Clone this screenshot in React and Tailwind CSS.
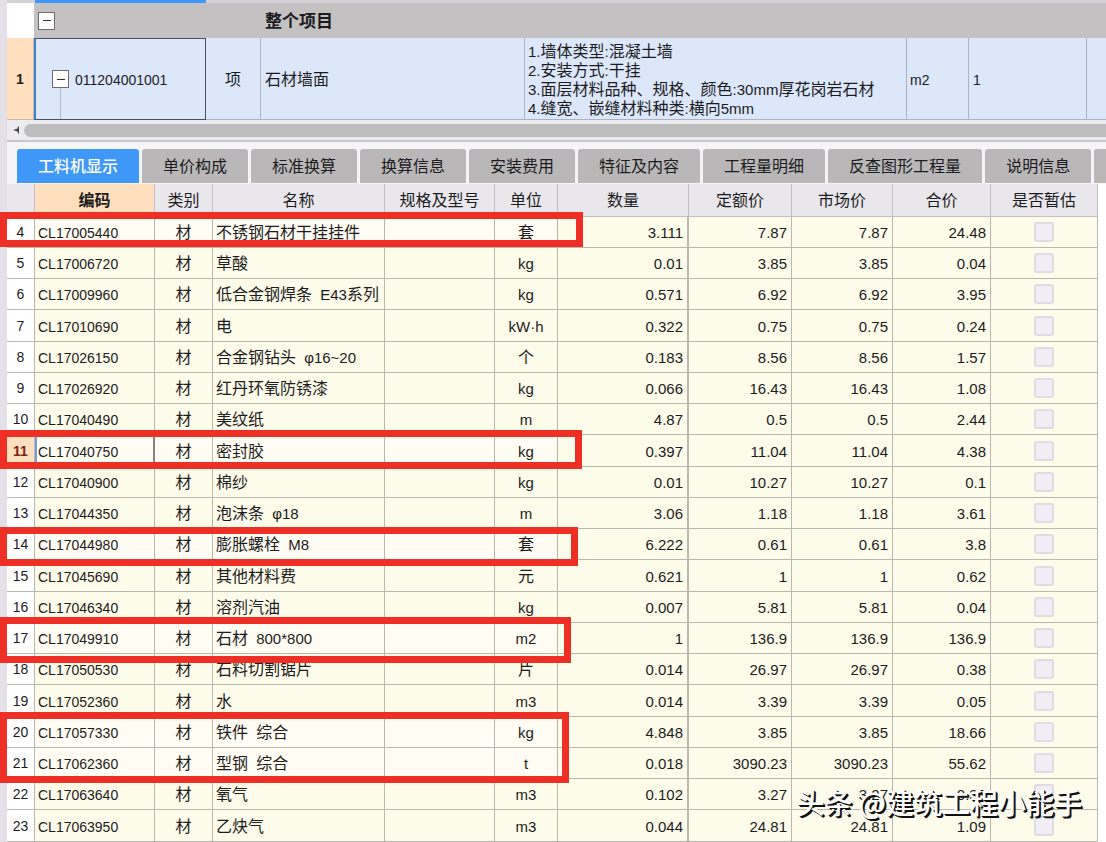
const materials = [
  [4, "CL17005440", "不锈钢石材干挂挂件", "套", "3.111", "7.87", "7.87", "24.48"],
  [5, "CL17006720", "草酸", "kg", "0.01", "3.85", "3.85", "0.04"],
  [6, "CL17009960", "低合金钢焊条 E43系列", "kg", "0.571", "6.92", "6.92", "3.95"],
  [7, "CL17010690", "电", "kW·h", "0.322", "0.75", "0.75", "0.24"],
  [8, "CL17026150", "合金钢钻头 φ16~20", "个", "0.183", "8.56", "8.56", "1.57"],
  [9, "CL17026920", "红丹环氧防锈漆", "kg", "0.066", "16.43", "16.43", "1.08"],
  [10, "CL17040490", "美纹纸", "m", "4.87", "0.5", "0.5", "2.44"],
  [11, "CL17040750", "密封胶", "kg", "0.397", "11.04", "11.04", "4.38"],
  [12, "CL17040900", "棉纱", "kg", "0.01", "10.27", "10.27", "0.1"],
  [13, "CL17044350", "泡沫条 φ18", "m", "3.06", "1.18", "1.18", "3.61"],
  [14, "CL17044980", "膨胀螺栓 M8", "套", "6.222", "0.61", "0.61", "3.8"],
  [15, "CL17045690", "其他材料费", "元", "0.621", "1", "1", "0.62"],
  [16, "CL17046340", "溶剂汽油", "kg", "0.007", "5.81", "5.81", "0.04"],
  [17, "CL17049910", "石材 800*800", "m2", "1", "136.9", "136.9", "136.9"],
  [18, "CL17050530", "石料切割锯片", "片", "0.014", "26.97", "26.97", "0.38"],
  [19, "CL17052360", "水", "m3", "0.014", "3.39", "3.39", "0.05"],
  [20, "CL17057330", "铁件 综合", "kg", "4.848", "3.85", "3.85", "18.66"],
  [21, "CL17062360", "型钢 综合", "t", "0.018", "3090.23", "3090.23", "55.62"],
  [22, "CL17063640", "氧气", "m3", "0.102", "3.27", "3.27", "0.33"],
  [23, "CL17063950", "乙炔气", "m3", "0.044", "24.81", "24.81", "1.09"],
];

const marked = [4, 11, 14, 17, 20, 21];

const tabs = [
  "工料机显示",
  "单价构成",
  "标准换算",
  "换算信息",
  "安装费用",
  "特征及内容",
  "工程量明细",
  "反查图形工程量",
  "说明信息",
];

const features = [
  "1.墙体类型:混凝土墙",
  "2.安装方式:干挂",
  "3.面层材料品种、规格、颜色:30mm厚花岗岩石材",
  "4.缝宽、嵌缝材料种类:横向5mm",
];

const headings = ["类别", "名称", "规格及型号", "单位", "数量", "定额价", "市场价", "合价", "是否暂估"];

const marks = [
  "top-[212px] w-[583px] h-[35px]",
  "top-[430px] w-[582px] h-[39px]",
  "top-[527px] w-[578px] h-[39px]",
  "top-[617px] w-[571px] h-[46px]",
  "top-[712px] w-[569px] h-[71px]",
];

// Latin runs are set a step smaller than the Chinese text around them.
function Mixed({ text }) {
  return text.split(/([\x20-\x7eφ·]+)/).map((run, i) =>
    i % 2 ? (
      <span key={i} className={run.startsWith(" ") ? "pl-1 text-[15px] leading-none" : "text-[15px] leading-none"}>
        {run}
      </span>
    ) : (
      run
    )
  );
}

function Collapse({ label }) {
  return (
    <button
      type="button"
      aria-label={label}
      className="flex h-[18px] w-[17px] shrink-0 items-center justify-center border border-[#6b6b70] bg-white"
    >
      <span className="h-px w-2 bg-[#333]" />
    </button>
  );
}

function ProjectTable() {
  return (
    <table className="w-full table-fixed border-separate border-spacing-0">
      <colgroup>
        <col className="w-[27px]" />
        <col className="w-[172px]" />
        <col className="w-[55px]" />
        <col className="w-[264px]" />
        <col className="w-[382px]" />
        <col className="w-[62px]" />
        <col className="w-[118px]" />
        <col />
      </colgroup>
      <tbody>
        <tr className="h-[35px] bg-[#c3c1c2]">
          <td className="bg-white p-0" />
          <td colSpan={2} className="p-0 pl-1">
            <Collapse label="收起整个项目" />
          </td>
          <td colSpan={5} className="p-0 pt-0.5 pl-1 text-[17px] font-bold">整个项目</td>
        </tr>
        <tr className="h-[82px] bg-[#dce7fa]">
          <td className="border-r border-b border-[#c9b9ac] bg-[#ffdfbd] p-0 text-center text-sm font-bold">1</td>
          <td className="border border-l-2 border-[#4a4f5c] border-l-[#3f7fd6] p-0">
            <div className="flex h-20 items-stretch gap-[6px] pl-4">
              <div className="flex flex-col items-center">
                <span className="flex-1" />
                <Collapse label="收起清单项" />
                <span className="w-px flex-1 bg-[#b4bccb]" />
              </div>
              <span className="self-center pt-0.5 text-sm">011204001001</span>
            </div>
          </td>
          <td className="border-r border-b border-[#aab2c4] p-0 pt-0.5 text-center">项</td>
          <td className="border-r border-b border-[#aab2c4] p-0 pt-0.5 pl-1">石材墙面</td>
          <td className="border-r border-b border-[#aab2c4] p-0 pt-0.5 pl-[3px]">
            {features.map((line) => (
              <p key={line} className="h-[19px] whitespace-nowrap leading-[19px]">
                <Mixed text={line} />
              </p>
            ))}
          </td>
          <td className="border-r border-b border-[#aab2c4] p-0 pt-0.5 pl-[3px] text-sm">m2</td>
          <td className="border-r border-b border-[#aab2c4] p-0 pt-0.5 pl-1 text-sm">1</td>
          <td className="border-b border-[#aab2c4] p-0" />
        </tr>
      </tbody>
    </table>
  );
}

function MaterialRow({ row }) {
  const [no, code, name, unit, qty, ...prices] = row;
  const current = no === 11;
  const tint = marked.includes(no) ? "bg-[#fffcf3]" : "";
  const cell = "border-r border-b border-[#b9b7b0] p-0";
  return (
    <tr className="h-[31px] bg-[#fdfbea] nth-[4n]:h-8">
      <td className={`${cell} text-center text-sm ${current ? "bg-[#ffdfbd] font-bold text-[#7a2412]" : "bg-white"}`}>
        {no}
      </td>
      <td
        className={`border-b border-[#b9b7b0] p-0 pt-0.5 text-sm ${tint} ${
          current ? "border-r-2 border-l-2 border-r-[#8d7f82] border-l-[#6f9fe0] pl-px" : "border-r pl-[3px]"
        }`}
      >
        {code}
      </td>
      <td className={`${cell} ${tint} pt-0.5 text-center`}>材</td>
      <td className={`${cell} ${tint} pt-0.5 pl-[3px] whitespace-nowrap`}>
        <Mixed text={name} />
      </td>
      <td className={`${cell} ${tint}`} />
      <td className={`${cell} ${tint} pt-0.5 text-center`}>
        <Mixed text={unit} />
      </td>
      <td className="border-r-2 border-b border-[#b9b7b0] p-0 pt-0.5 pr-1 text-right text-[15px]">{qty}</td>
      {prices.map((price, i) => (
        <td key={i} className={`${cell} pt-0.5 pr-1 text-right text-[15px]`}>
          {price}
        </td>
      ))}
      <td className={cell}>
        <input
          type="checkbox"
          aria-label={`${name} 是否暂估`}
          className="mx-auto block size-5 appearance-none rounded-[3px] border-2 border-[#dfdce4] bg-[#f0eef4]"
        />
      </td>
    </tr>
  );
}

function MaterialTable() {
  return (
    <table className="w-full table-fixed border-separate border-spacing-0">
      <colgroup>
        <col className="w-[28px]" />
        <col className="w-[120px]" />
        <col className="w-[58px]" />
        <col className="w-[172px]" />
        <col className="w-[110px]" />
        <col className="w-[63px]" />
        <col className="w-[131px]" />
        <col className="w-[103px]" />
        <col className="w-[101px]" />
        <col className="w-[98px]" />
        <col className="w-[107px]" />
      </colgroup>
      <thead>
        <tr className="h-[33px] bg-[#e9e7eb]">
          <th className="border-r border-b border-[#c2c0c4] p-0" />
          <th className="border-r border-b border-[#c2c0c4] bg-[#ffdfbd] p-0 pt-0.5 font-bold">编码</th>
          {headings.map((h) => (
            <th key={h} className="border-r border-b border-[#c2c0c4] p-0 pt-0.5 font-normal">
              {h}
            </th>
          ))}
        </tr>
      </thead>
      <tbody>
        {materials.map((row) => (
          <MaterialRow key={row[0]} row={row} />
        ))}
      </tbody>
    </table>
  );
}

export default function App() {
  return (
    <div className="relative flex overflow-hidden bg-white font-['Liberation_Sans','Noto_Sans_CJK_SC',sans-serif] text-base leading-5 text-[#1c1c1e]">
      <div className="w-[7px] shrink-0 bg-[#e3e1e7]" />
      <main className="min-w-0 flex-1">
        <div className="flex h-[3px] bg-[#d3d1d5] pl-7">
          <div className="w-[171px] bg-[#3f97f8]" />
        </div>
        <ProjectTable />
        <div className="flex h-[22px] items-center border-b-2 border-[#c9c7cb] bg-[#ecebef]">
          <button type="button" aria-label="向左滚动" className="flex w-[17px] justify-center">
            <svg viewBox="0 0 6 8" className="h-2 w-[6px]" fill="#444">
              <path d="M6 0v8L4.6 6.6V5.4L0 4l4.6-1.6V1.4z" />
            </svg>
          </button>
          <div className="h-[13px] flex-1 rounded-l-full bg-[#bebdbe]" />
        </div>
        <div role="tablist" className="flex gap-[3px] overflow-hidden bg-[#f5f4f6] pt-[7px] pb-px pl-[10px]">
          {tabs.map((tab, i) => (
            <button
              key={tab}
              type="button"
              role="tab"
              aria-selected={i === 0}
              className={`h-[34px] shrink-0 rounded-t-[3px] px-[21px] pt-0.5 whitespace-nowrap ${
                i === 0 ? "bg-[#3f97f8] font-medium text-white" : "bg-[#b9b7b8]"
              }`}
            >
              {tab}
            </button>
          ))}
          <span className="flex-1 rounded-tl-[3px] bg-[#b9b7b8]" />
        </div>
        <div className="mr-2">
          <MaterialTable />
        </div>
      </main>
      {marks.map((place) => (
        <div key={place} className={`pointer-events-none absolute left-0 border-[7px] border-[#ee2f25] ${place}`} />
      ))}
      <p className="absolute right-6 bottom-6 font-['Noto_Sans_CJK_SC',sans-serif] text-[28px] leading-8 font-medium whitespace-nowrap text-white [text-shadow:1px_1px_0_#111,2px_2px_0_#111]">
        头条 @建筑工程小能手
      </p>
    </div>
  );
}
